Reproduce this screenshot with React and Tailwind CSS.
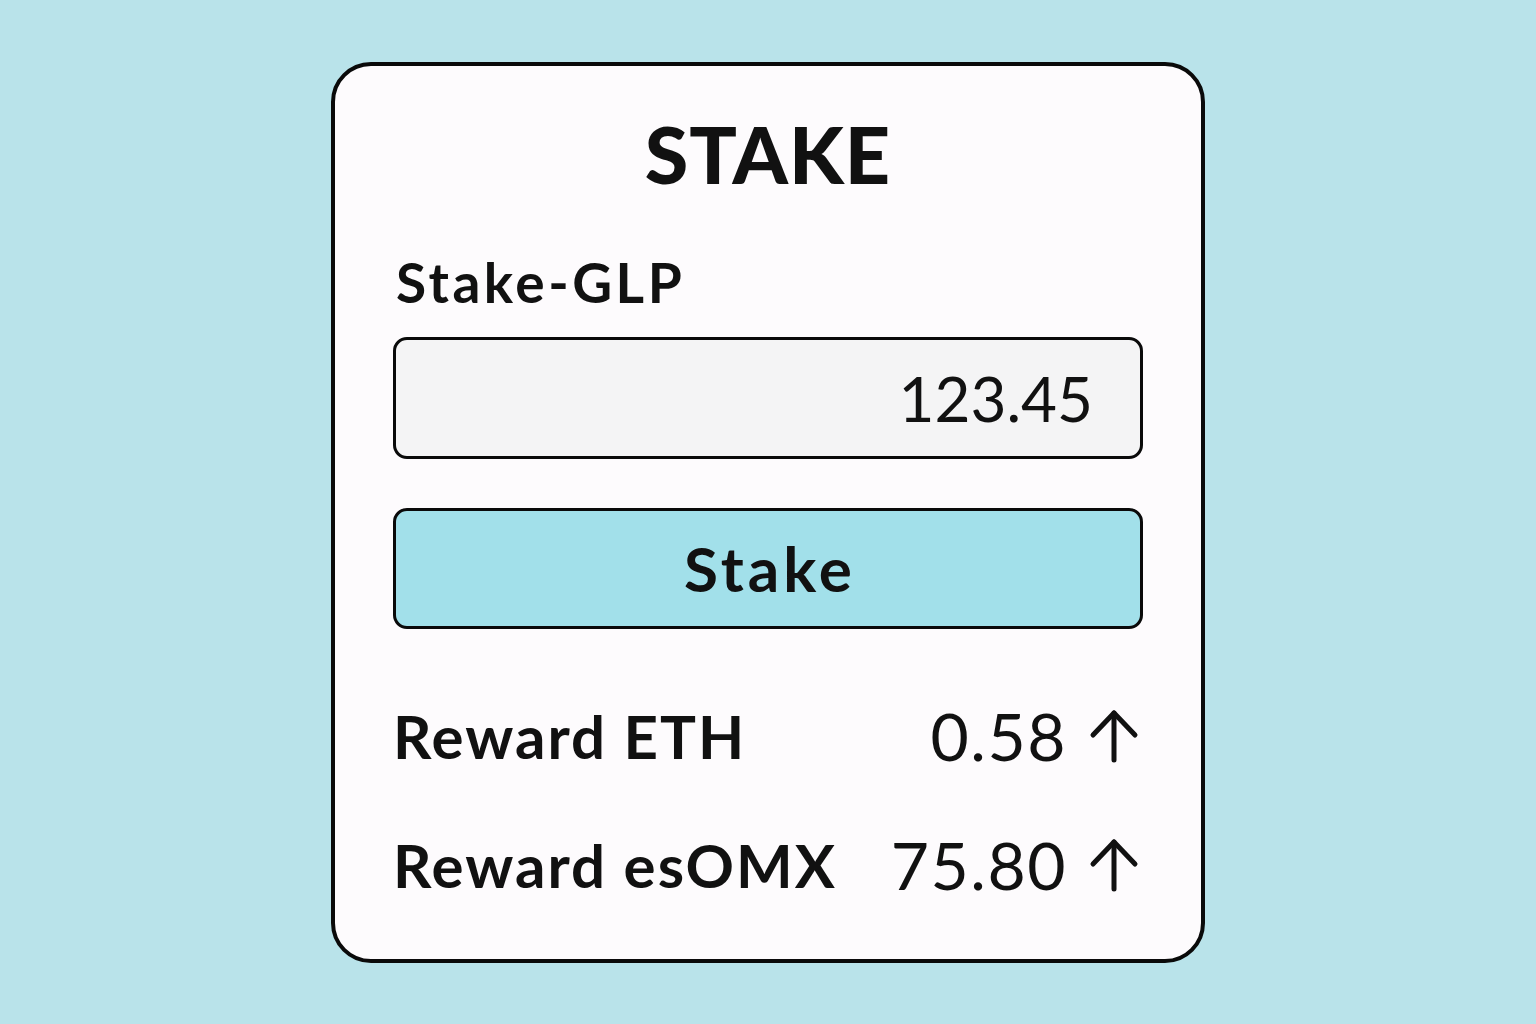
import React, { useState } from 'react';

const ArrowUp = () => (
  <svg width="50" height="54" viewBox="0 0 50 54" fill="none" stroke="#111" strokeWidth="5" strokeLinecap="round" strokeLinejoin="round">
    <path d="M25 51V4" />
    <path d="M4 26L25 4l21 22" />
  </svg>
);

const RewardRow = ({ label, value, className = '' }) => (
  <div className={`flex items-center justify-between h-[60px] ${className}`}>
    <span className="text-[60px] leading-[60px] font-bold tracking-[2px]">{label}</span>
    <div className="flex items-center gap-[22px] pr-[4px]">
      <span className="text-[66px] leading-[60px] font-normal tracking-[1.5px]">{value}</span>
      <ArrowUp />
    </div>
  </div>
);

export default function App() {
  const [amount, setAmount] = useState('123.45');

  return (
    <div
      className="min-h-screen w-full bg-[#b9e3ea] flex items-center justify-center text-[#111]"
      style={{ fontFamily: 'Lato, "Open Sans", sans-serif' }}
    >
      <div className="w-[874px] bg-[#fdfbfd] border-[4px] border-[#0a0a0a] rounded-[40px] px-[58px] pt-[48px] pb-[64px]">
        <h1 className="text-[79px] leading-none font-black text-center tracking-[1px]">STAKE</h1>

        <div className="mt-[62px] pl-[3px] text-[55px] leading-none font-bold tracking-[3.5px]">Stake-GLP</div>

        <input
          value={amount}
          onChange={(e) => setAmount(e.target.value)}
          className="mt-[27px] w-full h-[122px] bg-[#f4f4f5] border-[3px] border-[#0a0a0a] rounded-[14px] px-[47px] text-right text-[62px] font-normal outline-none"
        />

        <button
          type="button"
          className="mt-[49px] w-full h-[121px] bg-[#a2e0ea] border-[3px] border-[#0a0a0a] rounded-[14px] text-[62px] font-bold leading-none tracking-[4px] pl-[4px]"
        >
          Stake
        </button>

        <RewardRow label="Reward ETH" value="0.58" className="mt-[77px]" />
        <RewardRow label="Reward esOMX" value="75.80" className="mt-[69px]" />
      </div>
    </div>
  );
}
